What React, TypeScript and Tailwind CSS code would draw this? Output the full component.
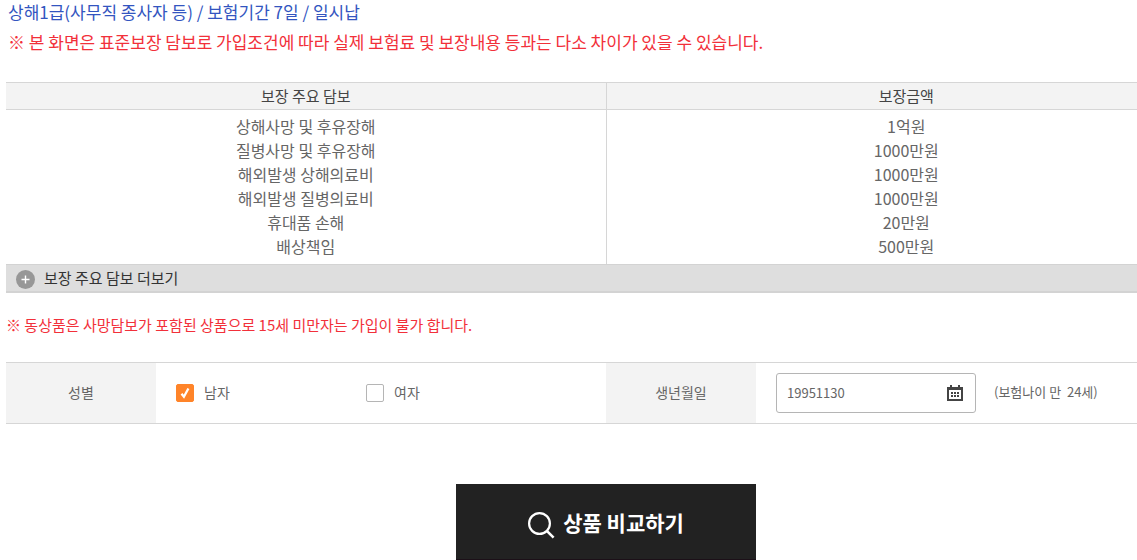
import { useState } from 'react';

const coverages = [
    { name: '상해사망 및 후유장해', amount: '1억원' },
    { name: '질병사망 및 후유장해', amount: '1000만원' },
    { name: '해외발생 상해의료비', amount: '1000만원' },
    { name: '해외발생 질병의료비', amount: '1000만원' },
    { name: '휴대품 손해', amount: '20만원' },
    { name: '배상책임', amount: '500만원' },
];

const PlusIcon = () => (
    <svg width="19" height="19" viewBox="0 0 19 19" aria-hidden="true">
        <circle cx="9.5" cy="9.5" r="9.5" fill="#979797" />
        <path d="M5.5 9.5h8M9.5 5.5v8" stroke="#fff" strokeWidth="1.4" />
    </svg>
);

const CalendarIcon = () => (
    <svg width="16" height="16" viewBox="0 0 16 16" fill="#444" aria-hidden="true">
        <path fillRule="evenodd" d="M0 2h3V0h2v2h6V0h2v2h3v14H0zM2 5v9h12V5z" />
        <path d="M4 7h2v2H4zM7 7h2v2H7zM10 7h2v2h-2zM4 10h2v2H4zM7 10h2v2H7zM10 10h2v2h-2z" />
    </svg>
);

const SearchIcon = () => (
    <svg width="27" height="27" viewBox="0 0 27 27" fill="none" stroke="#fff" aria-hidden="true">
        <circle cx="11.5" cy="11.5" r="10.4" strokeWidth="2.2" />
        <path d="M18.8 18.8l6.8 6.8" strokeWidth="2.6" />
    </svg>
);

type GenderBoxProps = {
    label: string;
    checked: boolean;
    onChange: () => void;
};

const GenderBox = ({ label, checked, onChange }: GenderBoxProps) => (
    <label className="flex w-[190px] items-center gap-[10px] cursor-pointer">
        <span className="relative size-[18px]">
            <input
                type="checkbox"
                checked={checked}
                onChange={onChange}
                className="peer block size-[18px] appearance-none rounded-xs border border-[#b5b5b5] bg-white checked:border-[#ff8429] checked:bg-[#ff8429]"
            />
            <svg className="pointer-events-none absolute inset-0 hidden peer-checked:block" width="18" height="18" viewBox="0 0 18 18" aria-hidden="true">
                <path d="M5.5 9.8l2.4 3L12.4 4.5" fill="none" stroke="#fff" strokeWidth="2.3" />
            </svg>
        </span>
        <span className="pb-[2px]">{label}</span>
    </label>
);

const App = () => {
    const [gender, setGender] = useState('M');
    const [birth, setBirth] = useState('19951130');

    return (
        <div className="overflow-hidden bg-white pl-[6px] font-['Noto_Sans_CJK_KR','Noto_Sans',sans-serif] text-[#666]">
            <div className="min-w-[1200px]">
                <div className="px-[2px] pb-[22px] text-[17px]">
                    <p className="leading-[24px] text-[#3355c0]">상해1급(사무직 종사자 등) / 보험기간 7일 / 일시납</p>
                    <p className="leading-[36px] text-[#f2303a]">※ 본 화면은 표준보장 담보로 가입조건에 따라 실제 보험료 및 보장내용 등과는 다소 차이가 있을 수 있습니다.</p>
                </div>

                <table className="w-full table-fixed border-collapse text-center">
                    <thead>
                        <tr className="h-[27px] border-y border-[#d6d6d6] bg-[#f3f3f3] text-[15px] leading-[26px] text-[#444]">
                            <th className="border-r border-[#d6d6d6] p-0 font-normal">보장 주요 담보</th>
                            <th className="p-0 font-normal">보장금액</th>
                        </tr>
                    </thead>
                    <tbody className="text-[16px] leading-[24px]">
                        {coverages.map((c) => (
                            <tr key={c.name} className="group">
                                <td className="border-r border-[#d6d6d6] p-0 group-first:pt-[4px] group-last:pb-[6px]">{c.name}</td>
                                <td className="p-0 group-first:pt-[4px] group-last:pb-[6px]">{c.amount}</td>
                            </tr>
                        ))}
                    </tbody>
                </table>

                <button type="button" className="flex h-[29px] w-full items-center gap-[9px] border-t border-b-2 border-t-[#d3d3d3] border-b-[#d3d3d3] bg-[#dedede] pl-[10px] text-[15px] leading-[26px] text-[#333]">
                    <span className="pt-[2px]">
                        <PlusIcon />
                    </span>
                    보장 주요 담보 더보기
                </button>

                <p className="pt-[20px] pb-[25px] text-[15px] leading-[24px] text-[#f2303a]">※ 동상품은 사망담보가 포함된 상품으로 15세 미만자는 가입이 불가 합니다.</p>

                <div className="flex h-[62px] items-stretch border-y border-[#d6d6d6] text-[14px]">
                    <div className="flex w-[150px] items-center justify-center bg-[#f3f3f3] pb-[2px]">성별</div>
                    <div className="flex flex-1 items-center pl-[20px]">
                        <GenderBox label="남자" checked={gender === 'M'} onChange={() => setGender('M')} />
                        <GenderBox label="여자" checked={gender === 'F'} onChange={() => setGender('F')} />
                    </div>
                    <label htmlFor="birth" className="flex w-[150px] items-center justify-center bg-[#f3f3f3] pb-[2px]">생년월일</label>
                    <div className="flex flex-1 items-center pl-[20px] text-[13px]">
                        <div className="flex h-[40px] w-[200px] items-center rounded-[3px] border border-[#b5b5b5] pl-[10px] pr-[12px]">
                            <input
                                id="birth"
                                type="text"
                                value={birth}
                                onChange={(e) => setBirth(e.target.value)}
                                className="min-w-0 flex-1 outline-none"
                            />
                            <button type="button" aria-label="달력">
                                <CalendarIcon />
                            </button>
                        </div>
                        <span className="pb-[2px] pl-[18px] whitespace-pre">(보험나이 만  24세)</span>
                    </div>
                </div>

                <div className="flex justify-center pt-[60px]">
                    <button type="button" className="flex h-[76px] w-[300px] items-center justify-center gap-[8px] border-b border-[#1c1018] bg-[#222] pt-[2px] text-[21px] font-bold text-white">
                        <span className="pt-[5px]">
                            <SearchIcon />
                        </span>
                        상품 비교하기
                    </button>
                </div>
            </div>
        </div>
    );
};

export default App;
